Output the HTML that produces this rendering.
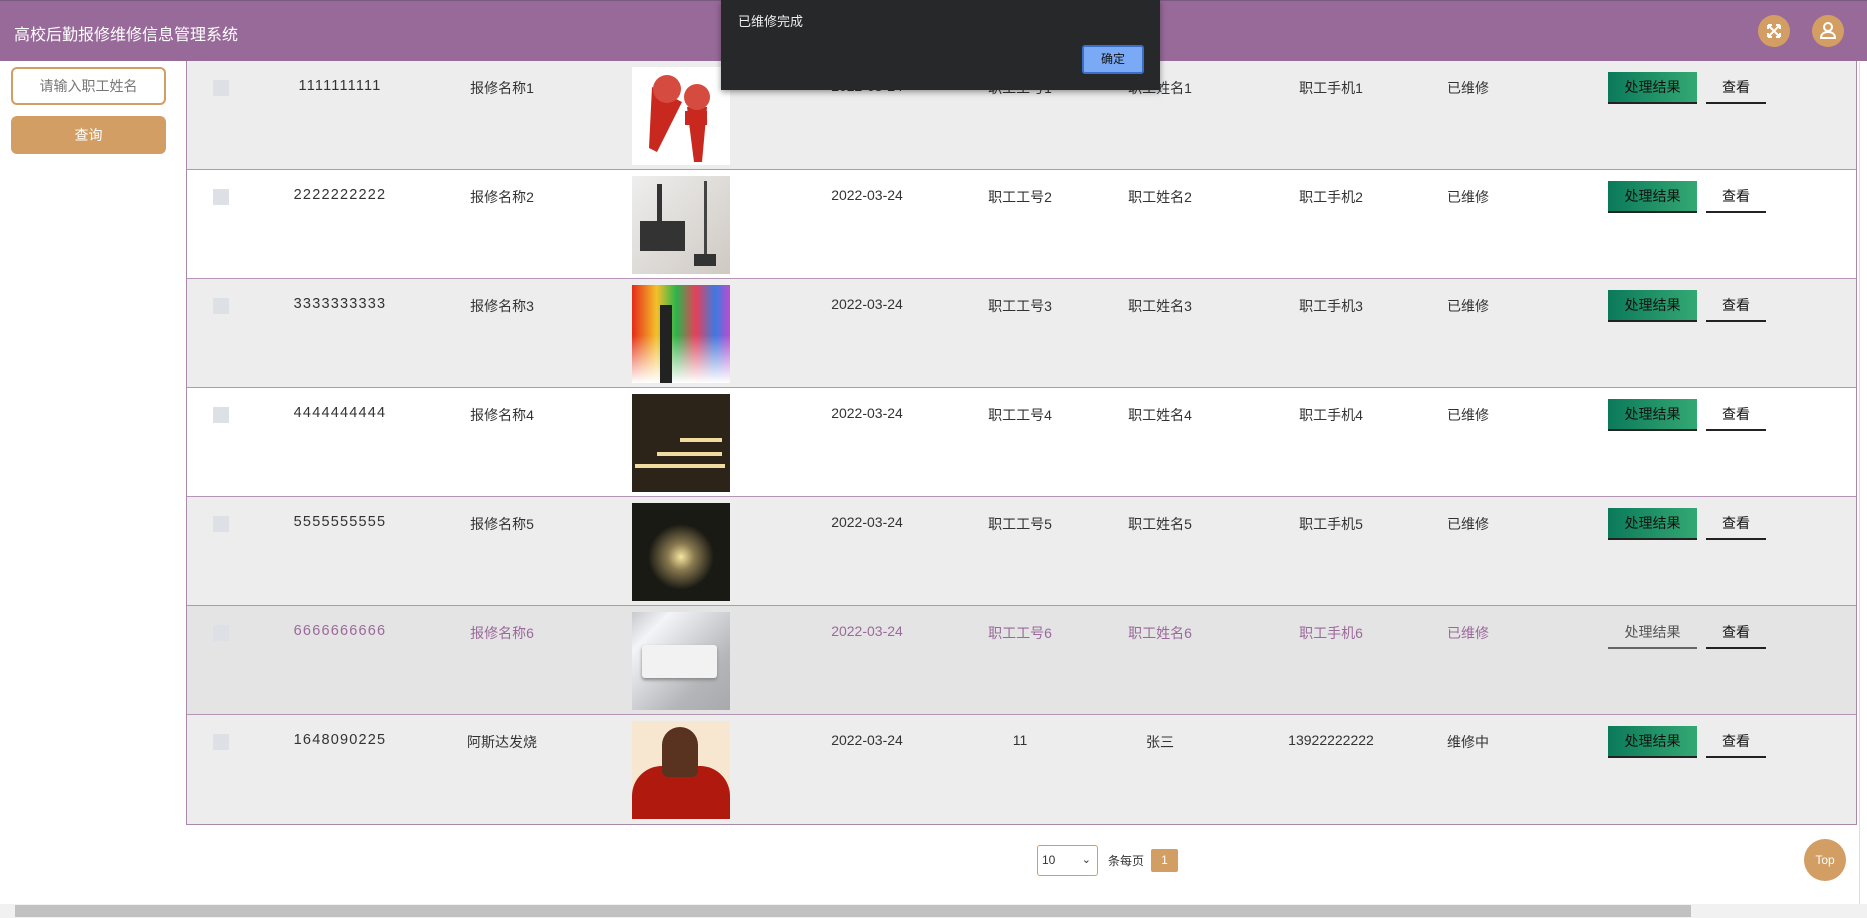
<!DOCTYPE html>
<html><head><meta charset="utf-8"><style>
*{box-sizing:border-box;margin:0;padding:0}
body{width:1867px;height:918px;overflow:hidden;background:#fff;font-family:"Liberation Sans","Noto Sans CJK SC",sans-serif;position:relative;color:#333}
.hdr{position:absolute;left:0;top:0;width:1867px;height:61px;background:#986a9a;border-top:1px solid #7a5a7c}
.title{position:absolute;left:14px;top:20px;color:#fff;font-size:16px}
.ic{position:absolute;top:14px;width:32px;height:32px;border-radius:50%;background:#d39e63}
.inp{position:absolute;left:11px;top:67px;width:155px;height:38px;border:2px solid #d39e63;border-radius:6px;text-align:center;line-height:34px;font-size:14px;color:#777}
.qb{position:absolute;left:11px;top:116px;width:155px;height:38px;background:#d39e63;border-radius:6px;color:#fff;text-align:center;line-height:38px;font-size:14px}
.tbl{position:absolute;left:186px;top:61px;width:1671px;height:764px;border:1px solid #a88aa8;border-top:none}
.row{position:absolute;left:0;width:1669px;height:109px;border-bottom:1px solid #b495b6}
.row span{position:absolute;top:17px;font-size:14px;transform:translateX(-50%);white-space:nowrap;color:#333}
.row span.n{letter-spacing:1.2px;font-size:14.5px}
.cb{position:absolute;left:26px;top:19px;width:16px;height:16px;background:#dde0e5}
.img{position:absolute;left:445px;top:6px;width:98px;height:98px}
.b1{position:absolute;left:1421px;top:11px;width:89px;height:32px;background:linear-gradient(90deg,#0b7a5a,#34a873);color:#111;font-size:14px;text-align:center;line-height:30px;border-bottom:2px solid #222}
.b2{position:absolute;left:1519px;top:11px;width:60px;height:32px;color:#111;font-size:14px;text-align:center;line-height:30px;border-bottom:2px solid #222}
.dlg{position:absolute;left:721px;top:0;width:439px;height:90px;background:#27282a;box-shadow:0 2px 6px rgba(0,0,0,.4)}
.dlg .t{position:absolute;left:17px;top:11px;color:#eee;font-size:13px}
.ok{position:absolute;left:361px;top:45px;width:62px;height:29px;background:#7aa9f5;border:2px solid #3b6fc6;border-radius:3px;font-size:12px;text-align:center;line-height:25px;color:#111}
</style></head><body>
<div class="hdr"><div class="title">高校后勤报修维修信息管理系统</div>
<div class="ic" style="left:1758px"><svg width="32" height="32"><g stroke="#fff" stroke-width="2" fill="none"><path d="M10 10l12 12M22 10l-12 12M10 10h4M10 10v4M22 10h-4M22 10v4M10 22h4M10 22v-4M22 22h-4M22 22v-4"/></g></svg></div>
<div class="ic" style="left:1812px"><svg width="32" height="32"><g stroke="#fff" stroke-width="2" fill="none"><circle cx="16" cy="12" r="4"/><path d="M9 23c0-4 3-6 7-6s7 2 7 6z"/></g></svg></div>
</div>
<div class="inp">请输入职工姓名</div>
<div class="qb">查询</div>
<div class="tbl">
<div class="row" style="top:0;background:#ededed"><div class="cb"></div><span class="n" style="left:153px">1111111111</span><span style="left:315px">报修名称1</span><div class="img" style="background:#fff"><svg width="98" height="98"><path d="M20 20l30 15-25 50-8-4z" fill="#c8281e"/><circle cx="35" cy="22" r="14" fill="#d64b40"/><path d="M55 40l20 0-5 55-8 0z" fill="#c8281e"/><circle cx="65" cy="30" r="13" fill="#d64b40"/><rect x="53" y="44" width="22" height="14" fill="#c8281e"/></svg></div><span style="left:680px">2022-03-24</span><span style="left:833px">职工工号1</span><span style="left:973px">职工姓名1</span><span style="left:1144px">职工手机1</span><span style="left:1281px">已维修</span><div class="b1">处理结果</div><div class="b2">查看</div></div>
<div class="row" style="top:109px;background:#fff"><div class="cb"></div><span class="n" style="left:153px">2222222222</span><span style="left:315px">报修名称2</span><div class="img" style="background:linear-gradient(135deg,#eee,#cfc9c2)"><svg width="98" height="98"><rect x="8" y="45" width="45" height="30" fill="#333"/><rect x="25" y="8" width="5" height="40" fill="#333"/><rect x="72" y="5" width="3" height="80" fill="#444"/><rect x="62" y="78" width="22" height="12" fill="#333"/></svg></div><span style="left:680px">2022-03-24</span><span style="left:833px">职工工号2</span><span style="left:973px">职工姓名2</span><span style="left:1144px">职工手机2</span><span style="left:1281px">已维修</span><div class="b1">处理结果</div><div class="b2">查看</div></div>
<div class="row" style="top:218px;background:#ededed"><div class="cb"></div><span class="n" style="left:153px">3333333333</span><span style="left:315px">报修名称3</span><div class="img" style="background:linear-gradient(90deg,#e52a1a,#f5c02a 25%,#2bb54a 45%,#e6405a 65%,#3c7ae0 85%,#c04ad0);"><div style="position:absolute;left:0;top:50px;width:98px;height:48px;background:linear-gradient(transparent,#fff)"></div><div style="position:absolute;left:28px;top:20px;width:12px;height:78px;background:#222"></div></div><span style="left:680px">2022-03-24</span><span style="left:833px">职工工号3</span><span style="left:973px">职工姓名3</span><span style="left:1144px">职工手机3</span><span style="left:1281px">已维修</span><div class="b1">处理结果</div><div class="b2">查看</div></div>
<div class="row" style="top:327px;background:#fff"><div class="cb"></div><span class="n" style="left:153px">4444444444</span><span style="left:315px">报修名称4</span><div class="img" style="background:#2c2418"><div style="position:absolute;left:3px;top:70px;width:90px;height:4px;background:#f0dca0"></div><div style="position:absolute;left:25px;top:58px;width:65px;height:4px;background:#f0dca0"></div><div style="position:absolute;left:48px;top:44px;width:42px;height:4px;background:#f0dca0"></div></div><span style="left:680px">2022-03-24</span><span style="left:833px">职工工号4</span><span style="left:973px">职工姓名4</span><span style="left:1144px">职工手机4</span><span style="left:1281px">已维修</span><div class="b1">处理结果</div><div class="b2">查看</div></div>
<div class="row" style="top:436px;background:#ededed"><div class="cb"></div><span class="n" style="left:153px">5555555555</span><span style="left:315px">报修名称5</span><div class="img" style="background:radial-gradient(circle at 50% 55%,#f8e6a0 0,#8a7a50 18%,#1a1a14 45%)"></div><span style="left:680px">2022-03-24</span><span style="left:833px">职工工号5</span><span style="left:973px">职工姓名5</span><span style="left:1144px">职工手机5</span><span style="left:1281px">已维修</span><div class="b1">处理结果</div><div class="b2">查看</div></div>
<div class="row" style="top:545px;background:#e4e4e4"><div class="cb"></div><span class="n" style="left:153px;color:#9a6a9a">6666666666</span><span style="left:315px;color:#9a6a9a">报修名称6</span><div class="img" style="background:linear-gradient(135deg,#c8c9cc,#f3f4f7 20%,#b5b6ba 70%,#a8a9ad)"><div style="position:absolute;left:10px;top:33px;width:75px;height:33px;background:#f2f2f2;border-radius:3px;box-shadow:0 2px 3px #888"></div></div><span style="left:680px;color:#9a6a9a">2022-03-24</span><span style="left:833px;color:#9a6a9a">职工工号6</span><span style="left:973px;color:#9a6a9a">职工姓名6</span><span style="left:1144px;color:#9a6a9a">职工手机6</span><span style="left:1281px;color:#9a6a9a">已维修</span><div class="b1" style="background:none;color:#555;border-bottom-color:#666">处理结果</div><div class="b2">查看</div></div>
<div class="row" style="top:654px;background:#ededed;border-bottom:none"><div class="cb"></div><span class="n" style="left:153px">1648090225</span><span style="left:315px">阿斯达发烧</span><div class="img" style="background:#f7e6d0"><div style="position:absolute;left:0;top:45px;width:98px;height:53px;background:#b01a0e;border-radius:30px 30px 0 0"></div><div style="position:absolute;left:30px;top:6px;width:36px;height:50px;background:#5a3320;border-radius:18px 18px 6px 6px"></div></div><span style="left:680px">2022-03-24</span><span style="left:833px">11</span><span style="left:973px">张三</span><span style="left:1144px">13922222222</span><span style="left:1281px">维修中</span><div class="b1">处理结果</div><div class="b2">查看</div></div>
</div>
<div style="position:absolute;left:1037px;top:845px;width:61px;height:31px;border:1px solid #d39e63;border-radius:3px;font-size:12px;line-height:29px;padding-left:4px">10<span style="position:absolute;right:6px;font-size:11px">&#x2304;</span></div>
<div style="position:absolute;left:1108px;top:852px;font-size:12px;color:#333">条每页</div>
<div style="position:absolute;left:1151px;top:849px;width:27px;height:23px;background:#d39e63;color:#fff;font-size:12px;text-align:center;line-height:23px;border-radius:2px">1</div>
<div style="position:absolute;left:1804px;top:839px;width:42px;height:42px;border-radius:50%;background:#d39e63;color:#fff;font-size:12px;text-align:center;line-height:42px">Top</div>
<div style="position:absolute;left:0;top:904px;width:1867px;height:14px;background:#f1f1f1"></div>
<div style="position:absolute;left:15px;top:905px;width:1676px;height:12px;background:#c1c1c1"></div>
<div style="position:absolute;left:1859px;top:62px;width:1px;height:842px;background:#ddd"></div>
<div class="dlg"><div class="t">已维修完成</div><div class="ok">确定</div></div>
</body></html>
